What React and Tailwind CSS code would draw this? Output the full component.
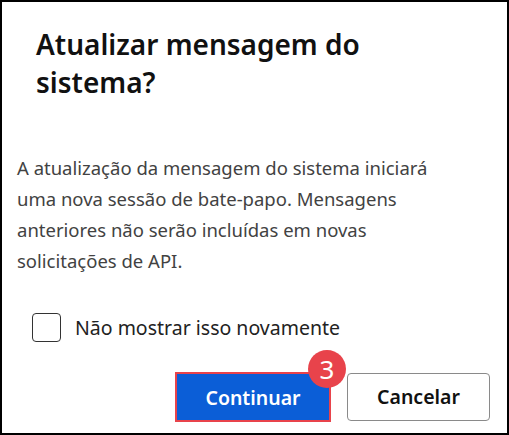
import React from "react";

export default function App() {
  return (
    <div
      className="w-[509px] h-[435px] bg-white border-2 border-black flex flex-col text-black"
      style={{ fontFamily: '"Noto Sans", "Open Sans", sans-serif' }}
    >
      <h1 className="pl-[34px] pt-[23px] pr-[60px] text-[28px] font-semibold leading-[38px] text-[#111]">
        Atualizar mensagem do sistema?
      </h1>

      <p className="mt-[51px] pl-[15px] pr-[37px] text-[18.5px] leading-[31px] text-[#424242]">
        A atualização da mensagem do sistema iniciará uma nova sessão de
        bate-papo. Mensagens anteriores não serão incluídas em novas
        solicitações de API.
      </p>

      <label className="mt-[37px] ml-[30px] flex items-center gap-[14px] text-[19.5px] leading-[29px] text-[#222]">
        <span className="w-[29px] h-[29px] rounded-[4px] border border-[#333] bg-white" />
        Não mostrar isso novamente
      </label>

      <div className="mt-[30px] pr-[17px] flex justify-end items-center gap-[16px]">
        <div className="relative">
          <button className="w-[156px] h-[50px] border-2 border-[#e8434b] bg-[#0b5ed7] text-white text-[19.5px] font-semibold">
            <span className="block w-full h-full leading-[46px] border border-[#0b5ed7]">
              Continuar
            </span>
          </button>
          <span className="absolute -top-[22px] -right-[15px] w-[38px] h-[38px] rounded-full bg-[#e8434b] text-white text-[26px] leading-[38px] text-center">
            3
          </span>
        </div>
        <button className="w-[143px] h-[48px] rounded-[4px] border border-[#8a8a8a] bg-white text-[19.5px] font-semibold text-[#111]">
          Cancelar
        </button>
      </div>
    </div>
  );
}
